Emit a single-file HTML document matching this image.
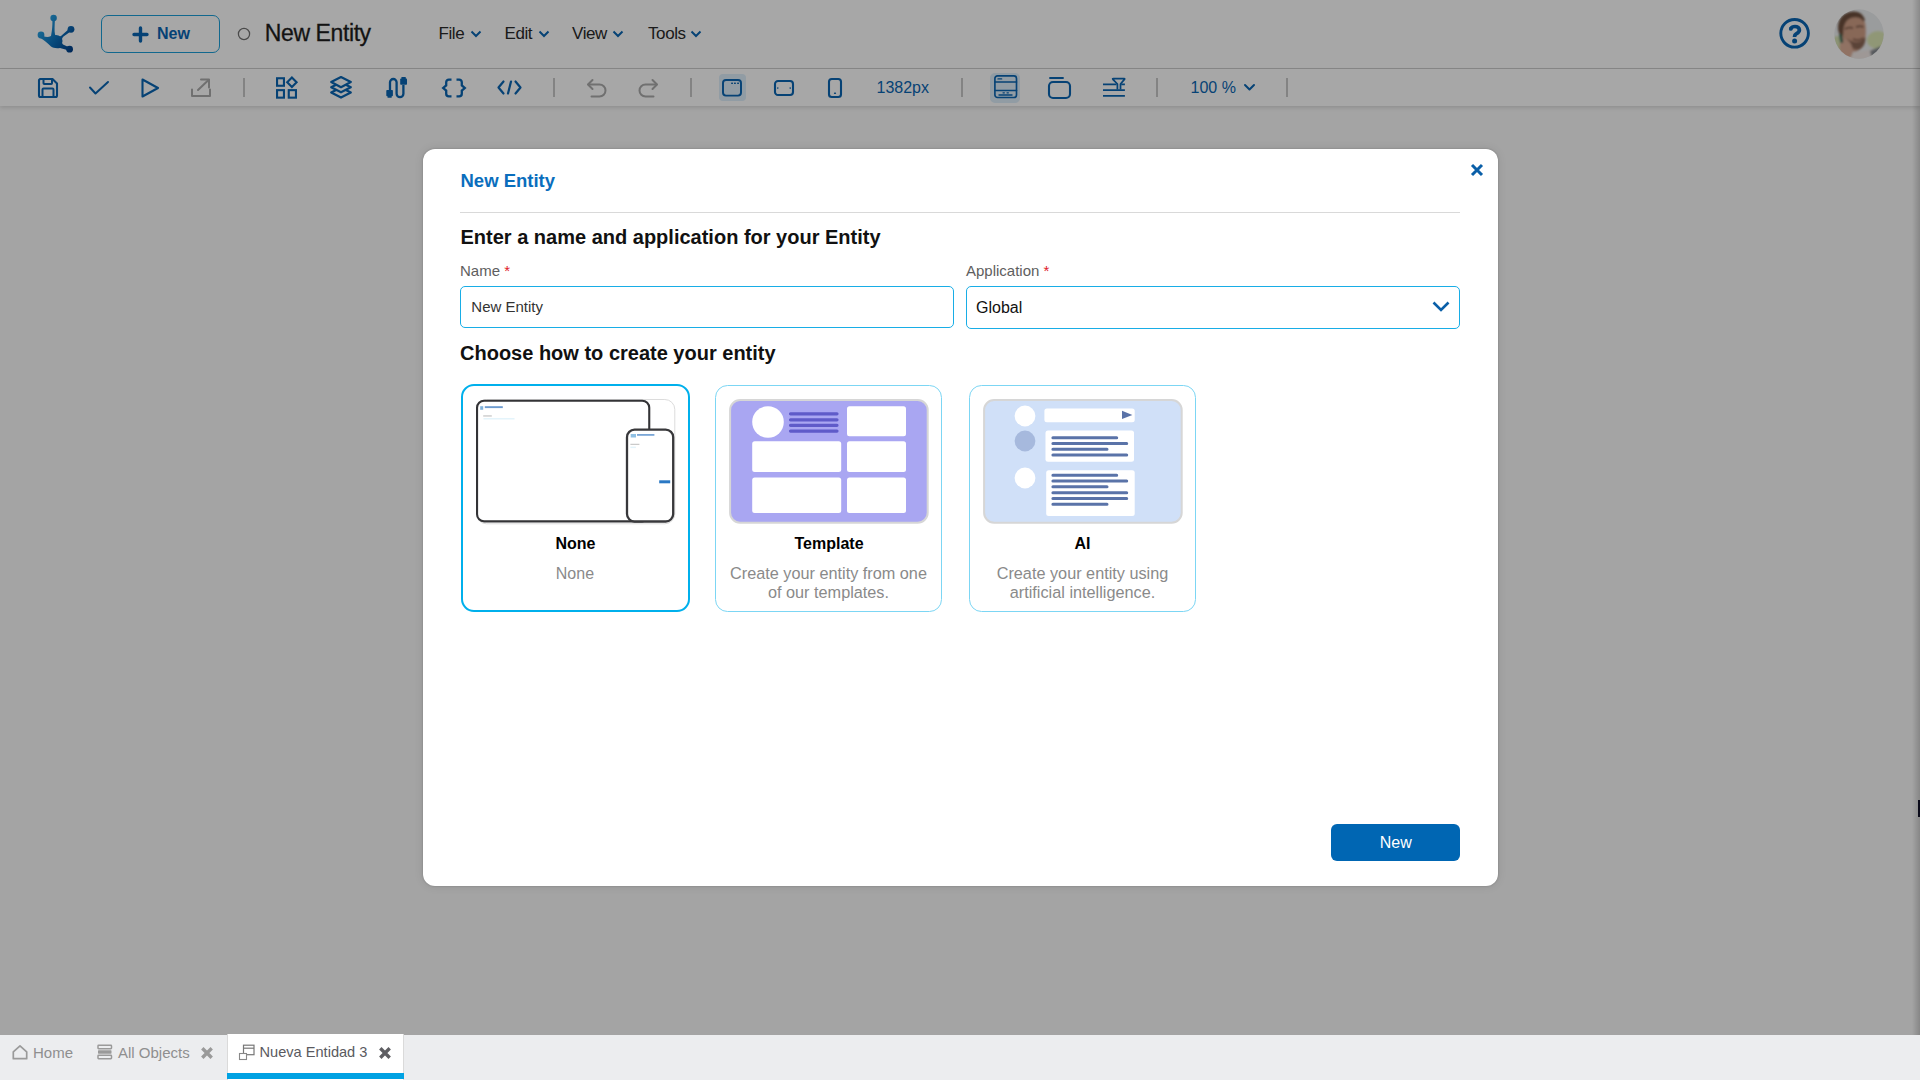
<!DOCTYPE html>
<html><head><meta charset="utf-8">
<style>
*{box-sizing:border-box;margin:0;padding:0}
html,body{width:1920px;height:1080px;overflow:hidden}
body{font-family:"Liberation Sans",sans-serif;background:#fafafa;position:relative;color:#222}
.abs{position:absolute}
#header{left:0;top:0;width:1920px;height:69px;background:#fff;border-bottom:1px solid #cfcfcf}
#toolbar{left:0;top:69px;width:1920px;height:37px;background:#fff;box-shadow:0 2px 4px rgba(0,0,0,.12)}
#overlay{left:0;top:0;width:1920px;height:1035px;background:rgba(0,0,0,.345)}
#rshadow{left:1912px;top:0;width:8px;height:1035px;background:linear-gradient(to right,rgba(0,0,0,0),rgba(0,0,0,.18))}
#modal{left:423px;top:149px;width:1075px;height:737px;background:#fff;border-radius:12px;box-shadow:0 0 2px rgba(0,0,0,.22),0 0 10px rgba(0,0,0,.1)}
#tabs{left:0;top:1035px;width:1920px;height:45px;background:#ecedef}
.t{position:absolute;white-space:nowrap;line-height:1}
svg{position:absolute;overflow:visible}
.sep{position:absolute;top:78px;width:2px;height:19px;background:#c9c9c9}
</style></head><body>
<div id="header" class="abs">
<svg width="60" height="60" style="left:30px;top:5px" viewBox="0 0 60 60">
<defs><linearGradient id="lg" gradientUnits="userSpaceOnUse" x1="9" y1="22" x2="42" y2="46"><stop offset="0" stop-color="#2aa6e6"/><stop offset="0.55" stop-color="#0a6cb8"/><stop offset="1" stop-color="#003d86"/></linearGradient></defs>
<g fill="url(#lg)">
<circle cx="23.6" cy="13" r="3.2"/><circle cx="41" cy="24.3" r="3.4"/><circle cx="11" cy="30" r="3.4"/><circle cx="39.6" cy="44.2" r="3.4"/>
<path d="M22.3 14 C22.8 22 21.5 28 21 31 C17 33.5 13 31 11 30 L10.5 33 C14 35 17.5 38 21 41.5 C23 43 26 43.5 30 43 L39 45.5 L40.5 43 L33 39.5 C31 37 31.5 33.5 33.5 31.5 L42 25.5 L40 23 L31 31 C28.5 32.5 26 31.5 25 29.5 C24.3 26 24.6 20 25 14 Z"/>
<ellipse cx="26" cy="36" rx="6.5" ry="6"/>
</g></svg>
<div class="abs" style="left:101px;top:15px;width:119px;height:38px;border:1.5px solid #1c9fd9;border-radius:7px"></div>
<svg width="17" height="17" style="left:132px;top:26px" viewBox="0 0 17 17"><path d="M8.5 2 V15 M2 8.5 H15" stroke="#0a66b3" stroke-width="3.4" stroke-linecap="round"/></svg>
<div class="t" style="left:157px;top:25.5px;font-size:16px;font-weight:bold;color:#0a66b3">New</div>
<svg width="14" height="14" style="left:237px;top:27px" viewBox="0 0 14 14"><circle cx="7" cy="7" r="5.6" fill="none" stroke="#727272" stroke-width="1.25"/></svg>
<div class="t" style="left:264.8px;top:21.5px;font-size:23px;letter-spacing:-0.4px;color:#1e1e1e;-webkit-text-stroke:0.3px #1e1e1e">New Entity</div>
<div class="t" style="left:438.5px;top:24.6px;font-size:17px;letter-spacing:-0.4px;color:#2a2a2a">File</div>
<div class="t" style="left:504.5px;top:24.6px;font-size:17px;letter-spacing:-0.4px;color:#2a2a2a">Edit</div>
<div class="t" style="left:572px;top:24.6px;font-size:17px;letter-spacing:-0.4px;color:#2a2a2a">View</div>
<div class="t" style="left:648px;top:24.6px;font-size:17px;letter-spacing:-0.4px;color:#2a2a2a">Tools</div>
<svg width="12" height="8" style="left:469.5px;top:30px" viewBox="0 0 12 8"><path d="M1.5 1.5 L6 6 L10.5 1.5" fill="none" stroke="#0a66b3" stroke-width="2"/></svg>
<svg width="12" height="8" style="left:537.5px;top:30px" viewBox="0 0 12 8"><path d="M1.5 1.5 L6 6 L10.5 1.5" fill="none" stroke="#0a66b3" stroke-width="2"/></svg>
<svg width="12" height="8" style="left:611.5px;top:30px" viewBox="0 0 12 8"><path d="M1.5 1.5 L6 6 L10.5 1.5" fill="none" stroke="#0a66b3" stroke-width="2"/></svg>
<svg width="12" height="8" style="left:690px;top:30px" viewBox="0 0 12 8"><path d="M1.5 1.5 L6 6 L10.5 1.5" fill="none" stroke="#0a66b3" stroke-width="2"/></svg>
<svg width="34" height="34" style="left:1778px;top:17px" viewBox="0 0 34 34"><circle cx="16.6" cy="16.35" r="13.8" fill="none" stroke="#0a66b3" stroke-width="2.9"/><path d="M12.6 11.9 C13.6 10.2 15.2 9.5 17 9.5 C19.6 9.5 21.4 11 21.4 13 C21.4 15.1 19.7 16 18.2 16.9 C17 17.6 16.6 18.3 16.6 19.3 V20.1" fill="none" stroke="#0a66b3" stroke-width="3.7" stroke-linecap="butt"/><circle cx="12.75" cy="11.95" r="1.85" fill="#0a66b3"/><circle cx="16.6" cy="24.1" r="2.5" fill="#0a66b3"/></svg>
<svg width="50" height="50" style="left:1833.5px;top:8.8px" viewBox="0 0 50 50">
<defs><clipPath id="avc"><circle cx="25" cy="25" r="24.7"/></clipPath><filter id="avb" x="-20%" y="-20%" width="140%" height="140%"><feGaussianBlur stdDeviation="0.9"/></filter></defs>
<g clip-path="url(#avc)"><rect width="50" height="50" fill="#eceef0"/>
<g filter="url(#avb)">
<ellipse cx="44" cy="31" rx="11" ry="9" fill="#dce7b4"/>
<ellipse cx="3" cy="36" rx="6" ry="9" fill="#d4e0b0"/>
<path d="M16 44 L40 40 L46 52 L12 52 Z" fill="#f1e9e6"/>
<path d="M36 42 L47 37 L48 50 L38 50 Z" fill="#858a90"/>
<path d="M8 14 C9 7 15 4 21 4.5 C27 5 31 10 31.5 17 C32 24 32 31 29 37 C26 42 21 44 16 42 C11 39 8 32 7.5 24 Z" fill="#d09f86"/>
<path d="M4 19 C4 9 10 3 19 2.5 C25 2.2 29 5 31 11 L29.5 12.5 C27 8.5 22 7.5 17 9 C13 10.5 10.5 14 9.5 20 L9 27 L6.5 27 C5 24 4 22 4 19 Z" fill="#6e4f3c"/>
<path d="M11 20 Q15 17.5 19 19" stroke="#6a4a3a" stroke-width="1.6" fill="none"/>
<path d="M22 18 Q26 16.5 29.5 18" stroke="#6a4a3a" stroke-width="1.6" fill="none"/>
<path d="M13 32 C16 39 21 42 26 40 C30 38 31.5 33 31.5 29 L30 28.5 C28 32 25 33.5 21 33 C18 32.5 15.5 31 13 30 Z" fill="#8c6856"/>
<path d="M19 30 Q24 32.5 29 29" stroke="#7a5444" stroke-width="1.5" fill="none"/>
<ellipse cx="12" cy="40" rx="6.5" ry="10" transform="rotate(-12 12 40)" fill="#dcae98"/>
<rect x="5.5" y="25" width="3.2" height="9" rx="1.2" transform="rotate(-10 7 29.5)" fill="#456e5a"/>
</g></g></svg>
</div>
<div id="toolbar" class="abs"></div>
<div class="abs" style="left:0;top:0">
<svg width="22" height="22" style="left:37px;top:77px" viewBox="0 0 22 22"><path d="M3 2 H15.5 L20 6.5 V18.5 a1.5 1.5 0 0 1 -1.5 1.5 H3.5 a1.5 1.5 0 0 1 -1.5 -1.5 V3.5 a1.5 1.5 0 0 1 1.5 -1.5 Z" fill="none" stroke="#0a66b3" stroke-width="2.1" stroke-linejoin="round" stroke-linecap="round"/><path d="M6.5 2 V6.2 a0.8 0.8 0 0 0 0.8 0.8 H14.2 a0.8 0.8 0 0 0 0.8 -0.8 V2" fill="none" stroke="#0a66b3" stroke-width="2" stroke-linejoin="round" stroke-linecap="round"/><path d="M5.5 20 V12.5 a1 1 0 0 1 1 -1 H15.5 a1 1 0 0 1 1 1 V20" fill="none" stroke="#0a66b3" stroke-width="2" stroke-linejoin="round" stroke-linecap="round"/></svg>
<svg width="22" height="16" style="left:88px;top:80px" viewBox="0 0 22 16"><path d="M2 7.5 L7.5 13.5 L20 2" fill="none" stroke="#0a66b3" stroke-width="2" stroke-linejoin="round" stroke-linecap="round"/></svg>
<svg width="20" height="22" style="left:140px;top:77px" viewBox="0 0 20 22"><path d="M2.5 2.5 L18 11 L2.5 19.5 Z" fill="none" stroke="#0a66b3" stroke-width="2.1" stroke-linejoin="round" stroke-linecap="round"/></svg>
<svg width="22" height="20" style="left:190px;top:78px" viewBox="0 0 22 20"><path d="M2 11.5 V18 H20 V11.5" fill="none" stroke="#ababab" stroke-width="2" stroke-linejoin="round" stroke-linecap="round"/><path d="M8 12 L18.5 2" fill="none" stroke="#ababab" stroke-width="2" stroke-linejoin="round" stroke-linecap="round"/><path d="M11 1.5 H19 V9.5" fill="none" stroke="#ababab" stroke-width="2" stroke-linejoin="round" stroke-linecap="round"/></svg>
<div class="sep" style="left:243px"></div>
<div class="sep" style="left:553px"></div>
<div class="sep" style="left:689.5px"></div>
<div class="sep" style="left:961px"></div>
<div class="sep" style="left:1156px"></div>
<div class="sep" style="left:1286px"></div>
<svg width="24" height="25" style="left:275px;top:75px" viewBox="0 0 24 25"><rect x="2.05" y="3.25" width="6.9" height="7.5" fill="none" stroke="#0a66b3" stroke-width="2.1"/><rect x="2.05" y="15.15" width="6.9" height="7.5" fill="none" stroke="#0a66b3" stroke-width="2.1"/><rect x="13.75" y="15.15" width="7.2" height="7.5" fill="none" stroke="#0a66b3" stroke-width="2.1"/><path d="M16.9 2.5 L21.6 7.2 L16.9 11.9 L12.2 7.2 Z" fill="none" stroke="#0a66b3" stroke-width="2.1"/></svg>
<svg width="24" height="25" style="left:329px;top:75px" viewBox="0 0 24 25"><path d="M12 12.45 L21.8 17.50 L12 22.55 L2.2 17.50 Z" fill="#fff" stroke="#0a66b3" stroke-width="2.2" stroke-linejoin="round"/><path d="M12 7.25 L21.8 12.30 L12 17.35 L2.2 12.30 Z" fill="#fff" stroke="#0a66b3" stroke-width="2.2" stroke-linejoin="round"/><path d="M12 2.05 L21.8 7.10 L12 12.15 L2.2 7.10 Z" fill="#fff" stroke="#0a66b3" stroke-width="2.2" stroke-linejoin="round"/></svg>
<svg width="24" height="24" style="left:385px;top:76px" viewBox="0 0 24 24"><path d="M5 14 V6.3 a3.3 3.3 0 0 1 6.6 0 V17.7 a3.3 3.3 0 0 0 6.8 0 V9" fill="none" stroke="#0a66b3" stroke-width="2.3"/><rect x="1.3" y="14" width="6.6" height="6.2" rx="0.8" fill="#0a66b3"/><rect x="2.5" y="19.5" width="4.2" height="2.3" rx="0.6" fill="#0a66b3"/><rect x="15.2" y="2.5" width="6.8" height="6.3" rx="0.8" fill="#0a66b3"/><rect x="16.4" y="1" width="4.4" height="2.2" rx="0.6" fill="#0a66b3"/></svg>
<svg width="26" height="22" style="left:441px;top:77px" viewBox="0 0 26 22"><path d="M10.5 2.6 H7.8 a2.6 2.6 0 0 0 -2.6 2.6 V8.4 L2.2 11 L5.2 13.6 V16.8 a2.6 2.6 0 0 0 2.6 2.6 H10.5" fill="none" stroke="#0a66b3" stroke-width="2.3" stroke-linecap="butt" stroke-linejoin="miter"/><path d="M15.5 2.6 H18.2 a2.6 2.6 0 0 1 2.6 2.6 V8.4 L23.8 11 L20.8 13.6 V16.8 a2.6 2.6 0 0 1 -2.6 2.6 H15.5" fill="none" stroke="#0a66b3" stroke-width="2.3" stroke-linecap="butt" stroke-linejoin="miter"/></svg>
<svg width="27" height="17" style="left:496px;top:79px" viewBox="0 0 27 17"><path d="M7.5 2.5 L2.5 8.5 L7.5 14.5" fill="none" stroke="#0a66b3" stroke-width="2.2" stroke-linejoin="round" stroke-linecap="round"/><path d="M19.5 2.5 L24.5 8.5 L19.5 14.5" fill="none" stroke="#0a66b3" stroke-width="2.2" stroke-linejoin="round" stroke-linecap="round"/><path d="M15 2.5 L12 14.5" fill="none" stroke="#0a66b3" stroke-width="2.2" stroke-linejoin="round" stroke-linecap="round"/></svg>
<svg width="22" height="21" style="left:586px;top:78px" viewBox="0 0 22 21"><path d="M6.5 2 L2 6.5 L6.5 11" fill="none" stroke="#ababab" stroke-width="2" stroke-linejoin="round" stroke-linecap="round"/><path d="M2.5 6.5 H13.5 a6 6 0 0 1 0 12 H5.5" fill="none" stroke="#ababab" stroke-width="2" stroke-linejoin="round" stroke-linecap="round"/></svg>
<svg width="22" height="21" style="left:637px;top:78px" viewBox="0 0 22 21"><path d="M15.5 2 L20 6.5 L15.5 11" fill="none" stroke="#ababab" stroke-width="2" stroke-linejoin="round" stroke-linecap="round"/><path d="M19.5 6.5 H8.5 a6 6 0 0 0 0 12 H16.5" fill="none" stroke="#ababab" stroke-width="2" stroke-linejoin="round" stroke-linecap="round"/></svg>
<div class="abs" style="left:719px;top:74px;width:27px;height:27px;border-radius:4px;background:#ddeefa"></div>
<svg width="22" height="21" style="left:721px;top:78px" viewBox="0 0 22 21"><rect x="2" y="2.05" width="18" height="15.55" rx="3" fill="none" stroke="#0a66b3" stroke-width="1.95"/><rect x="10.1" y="4.6" width="1.9" height="1.5" rx="0.6" fill="#0a66b3"/><rect x="13" y="4.6" width="1.9" height="1.5" rx="0.6" fill="#0a66b3"/><rect x="16.1" y="4.6" width="1.9" height="1.5" rx="0.6" fill="#0a66b3"/></svg>
<svg width="22" height="18" style="left:773px;top:79px" viewBox="0 0 22 18"><rect x="2" y="2" width="18" height="14" rx="3" fill="none" stroke="#0a66b3" stroke-width="2.1" stroke-linejoin="round" stroke-linecap="round"/><path d="M4.8 9 v0.1 M17.2 9 v0.1" fill="none" stroke="#0a66b3" stroke-width="1.6" stroke-linejoin="round" stroke-linecap="round"/></svg>
<svg width="16" height="22" style="left:827px;top:77px" viewBox="0 0 16 22"><rect x="2" y="2" width="12" height="18" rx="2.8" fill="none" stroke="#0a66b3" stroke-width="2.1" stroke-linejoin="round" stroke-linecap="round"/><path d="M7.6 16.2 h0.8" fill="none" stroke="#0a66b3" stroke-width="1.4" stroke-linejoin="round" stroke-linecap="round"/></svg>
<div class="t" style="left:876.5px;top:79.7px;font-size:16px;color:#0a66b3">1382px</div>
<div class="abs" style="left:990px;top:73px;width:30px;height:30px;border-radius:5px;background:#ddeefa"></div>
<svg width="25" height="25" style="left:993px;top:74px" viewBox="0 0 25 25"><rect x="1.9" y="1.9" width="21.6" height="21.6" rx="2.6" fill="none" stroke="#0a66b3" stroke-width="1.65" stroke-linejoin="round" stroke-linecap="round"/><path d="M2 8 H23.5 M2 16.5 H23.5" fill="none" stroke="#0a66b3" stroke-width="1.65" stroke-linejoin="round" stroke-linecap="round"/><path d="M5 4.9 H8.6" fill="none" stroke="#0a66b3" stroke-width="1.4" stroke-linejoin="round" stroke-linecap="round" stroke-linecap="butt"/><path d="M6 21 H19" fill="none" stroke="#0a66b3" stroke-width="1.4" stroke-linejoin="round" stroke-linecap="round" stroke-linecap="butt"/><path d="M10 18.8 H11.4 M14 18.8 H15.4" fill="none" stroke="#0a66b3" stroke-width="1.2" stroke-linejoin="round" stroke-linecap="round" stroke-linecap="butt"/></svg>
<svg width="25" height="24" style="left:1047px;top:76px" viewBox="0 0 25 24"><path d="M3 2 H16" fill="none" stroke="#0a66b3" stroke-width="1.9" stroke-linejoin="round" stroke-linecap="round" stroke-linecap="butt"/><rect x="2" y="6" width="21" height="16" rx="4" fill="none" stroke="#0a66b3" stroke-width="2.1" stroke-linejoin="round" stroke-linecap="round"/></svg>
<svg width="24" height="22" style="left:1102px;top:76px" viewBox="0 0 24 22"><path d="M1 8.4 H14.5 M19.2 8.4 H22.9 M1 14.2 H22.9 M1 19.9 H22.9" fill="none" stroke="#0a66b3" stroke-width="1.75"/><path d="M15.4 13.4 V8 L10.9 3.3 Q10.3 2.5 11.3 2.5 H22.1 Q23.1 2.5 22.4 3.4 L18.5 8 V13.4" fill="none" stroke="#0a66b3" stroke-width="1.75" stroke-linejoin="round"/></svg>
<div class="t" style="left:1190.5px;top:80.3px;font-size:16px;color:#0a66b3">100 %</div>
<svg width="13" height="9" style="left:1242.5px;top:83px" viewBox="0 0 13 9"><path d="M2 2 L6.5 6.5 L11 2" fill="none" stroke="#0a66b3" stroke-width="2" stroke-linejoin="round" stroke-linecap="round"/></svg>
</div>
<div id="overlay" class="abs"></div>
<div id="rshadow" class="abs"></div>
<div class="abs" style="left:1918px;top:800px;width:2px;height:17px;background:#0b0b1a"></div>
<div id="modal" class="abs"></div>
<div class="abs" style="left:0;top:0">
<div class="t" style="left:460.5px;top:172.2px;font-size:18.5px;font-weight:bold;color:#0a6ebd">New Entity</div>
<svg width="16" height="16" style="left:1469px;top:162px" viewBox="0 0 16 16"><path d="M3 3 L13 13 M13 3 L3 13" stroke="#0a5fa8" stroke-width="3" stroke-linecap="butt"/></svg>
<div class="abs" style="left:460px;top:212px;width:1000px;height:1px;background:#d9d9d9"></div>
<div class="t" style="left:460.5px;top:227px;font-size:20px;font-weight:bold;color:#111">Enter a name and application for your Entity</div>
<div class="t" style="left:460px;top:263px;font-size:15px;color:#5e5e5e">Name <span style="color:#e0202a">*</span></div>
<div class="abs" style="left:460px;top:286px;width:494px;height:41.5px;border:1.6px solid #18ade6;border-radius:5px"></div>
<div class="t" style="left:471.3px;top:299.3px;font-size:15px;color:#333">New Entity</div>
<div class="t" style="left:966px;top:263px;font-size:15px;color:#5e5e5e">Application <span style="color:#e0202a">*</span></div>
<div class="abs" style="left:966px;top:286px;width:494px;height:42.5px;border:1.6px solid #18ade6;border-radius:5px"></div>
<div class="t" style="left:976px;top:299.5px;font-size:16px;color:#111">Global</div>
<svg width="20" height="14" style="left:1431px;top:300px" viewBox="0 0 20 14"><path d="M2.5 2.5 L10 10 L17.5 2.5" fill="none" stroke="#0a5fa8" stroke-width="2.6"/></svg>
<div class="t" style="left:460px;top:343.2px;font-size:20px;font-weight:bold;color:#111">Choose how to create your entity</div>
<div class="abs" style="left:461px;top:384px;width:229px;height:228px;border:2px solid #00b0ec;border-radius:13px"></div>
<div class="abs" style="left:715px;top:385px;width:227px;height:227px;border:1px solid #7cd6f4;border-radius:12.5px"></div>
<div class="abs" style="left:969px;top:385px;width:227px;height:227px;border:1px solid #7cd6f4;border-radius:12.5px"></div>
<svg width="200" height="126" style="left:476px;top:399px" viewBox="0 0 200 126">
<rect x="0.5" y="0.5" width="198.3" height="124.3" rx="10" fill="#fff" stroke="#dcdcdc" stroke-width="1"/>
<rect x="1.05" y="1.75" width="172.2" height="120.6" rx="7" fill="#fff" stroke="#333336" stroke-width="2.1"/>
<rect x="4.2" y="7.2" width="3" height="3.6" fill="#7fb2dc"/>
<rect x="8.8" y="7.2" width="18" height="1.9" fill="#6d9bcf"/>
<rect x="7.2" y="16.3" width="8.6" height="1.3" fill="#c8c8c8"/>
<rect x="7.5" y="19" width="31" height="1.5" fill="#e4f4fb"/>
<rect x="151" y="30.7" width="46.2" height="91.8" rx="7.5" fill="#fff" stroke="#38383b" stroke-width="2.3"/>
<rect x="154.7" y="35" width="5.3" height="3.5" fill="#8fc0e4"/>
<rect x="161" y="35" width="17.4" height="1.8" fill="#7aa6d6"/>
<rect x="154.4" y="44.8" width="9" height="1" fill="#bdbdbd"/>
<rect x="154.4" y="47.6" width="5.5" height="1.5" fill="#e3f3fa"/>
<rect x="183.2" y="81.3" width="11" height="3" fill="#2a78c4"/>
</svg>
<svg width="200" height="126" style="left:729px;top:399px" viewBox="0 0 200 126">
<rect x="1.1" y="1.1" width="197.6" height="122.6" rx="10" fill="#a9a6f2" stroke="#d6d6d6" stroke-width="2"/>
<circle cx="39" cy="23" r="15.8" fill="#fff"/>
<path d="M61.5 14.8 H108 M61.5 20.8 H108 M61.5 26.3 H108 M61.5 32.1 H108" stroke="#5f5bc9" stroke-width="3.2" stroke-linecap="round"/>
<rect x="118" y="7.3" width="59" height="30" rx="2.5" fill="#fff"/>
<rect x="23.2" y="42.2" width="89" height="30.9" rx="2.5" fill="#fff"/>
<rect x="118" y="42.2" width="59" height="30.9" rx="2.5" fill="#fff"/>
<rect x="23.2" y="78.5" width="89" height="35.4" rx="2.5" fill="#fff"/>
<rect x="118" y="78.5" width="59" height="35.4" rx="2.5" fill="#fff"/>
</svg>
<svg width="200" height="126" style="left:983px;top:399px" viewBox="0 0 200 126">
<rect x="1.1" y="1.1" width="197.6" height="122.6" rx="10" fill="#d0e0f8" stroke="#d6d6d6" stroke-width="2"/>
<circle cx="42" cy="17" r="10.4" fill="#fff"/>
<circle cx="42" cy="42" r="10.4" fill="#a6b9dd"/>
<circle cx="42" cy="79" r="10.4" fill="#fff"/>
<rect x="61.4" y="9.6" width="90.3" height="13.6" rx="2.5" fill="#fff"/>
<path d="M139 11.8 L149.4 15.9 L139 20 Z" fill="#5a73a8"/>
<rect x="62.5" y="31.6" width="88.5" height="31.1" rx="2.5" fill="#fff"/>
<path d="M69.9 38.8 H133.7 M69.9 44.5 H143.7 M69.9 50.2 H124 M69.9 55.9 H143.7" stroke="#5a73a8" stroke-width="3" stroke-linecap="round"/>
<rect x="63.2" y="71.3" width="88.5" height="45.8" rx="2.5" fill="#fff"/>
<path d="M69.9 76.3 H133.7 M69.9 82.1 H143.7 M69.9 87.8 H124 M69.9 93.7 H143.7 M69.9 99.4 H143.7 M69.9 105.2 H124" stroke="#5a73a8" stroke-width="3" stroke-linecap="round"/>
</svg>
<div class="t" style="left:555.5px;top:535.5px;font-size:16px;font-weight:bold;color:#000">None</div>
<div class="t" style="left:555.8px;top:565.7px;font-size:16px;color:#8a8a8a">None</div>
<div class="t" style="left:794.5px;top:535.5px;font-size:16px;font-weight:bold;color:#000">Template</div>
<div class="abs" style="left:715px;top:564.3px;width:227px;text-align:center;font-size:16.25px;line-height:19px;color:#8a8a8a">Create your entity from one<br>of our templates.</div>
<div class="t" style="left:1074.5px;top:535.5px;font-size:16px;font-weight:bold;color:#000">AI</div>
<div class="abs" style="left:969px;top:564.3px;width:227px;text-align:center;font-size:16.25px;line-height:19px;color:#8a8a8a">Create your entity using<br>artificial intelligence.</div>
<div class="abs" style="left:1331px;top:824px;width:129px;height:37px;border-radius:6px;background:#0066b3"></div>
<div class="t" style="left:1379.8px;top:834.5px;font-size:16px;color:#fff">New</div>
</div>
<div id="tabs" class="abs">
<svg width="18" height="18" style="left:10.5px;top:9px" viewBox="0 0 18 18"><path d="M2.3 7.9 L9 1.8 L15.7 7.9 V14.7 H2.3 Z" fill="none" stroke="#9a9a9a" stroke-width="1.7" stroke-linejoin="round"/></svg>
<div class="t" style="left:33px;top:10px;font-size:15px;color:#8f8f8f">Home</div>
<svg width="16" height="16" style="left:97px;top:9px" viewBox="0 0 16 16"><rect x="1" y="1.3" width="13.5" height="3.4" rx="0.6" fill="none" stroke="#9a9a9a" stroke-width="1.5"/><rect x="1" y="6.3" width="13.5" height="3.4" rx="0.6" fill="#9a9a9a"/><rect x="1" y="11.3" width="13.5" height="3.4" rx="0.6" fill="none" stroke="#9a9a9a" stroke-width="1.5"/></svg>
<div class="t" style="left:118px;top:10px;font-size:15px;color:#8f8f8f">All Objects</div>
<svg width="14" height="14" style="left:199.5px;top:11px" viewBox="0 0 14 14"><path d="M2.3 2.3 L11.7 11.7 M11.7 2.3 L2.3 11.7" stroke="#9a9a9a" stroke-width="3.4" stroke-linecap="butt"/></svg>
<div class="abs" style="left:227px;top:-1px;width:177px;height:46px;background:#fff;border-left:1px solid #dadada;border-right:1px solid #dadada"></div>
<div class="abs" style="left:227px;top:38px;width:177px;height:6px;background:#00a2e3"></div>
<svg width="18" height="18" style="left:238px;top:9px" viewBox="0 0 18 18"><rect x="5.5" y="1.2" width="10.5" height="9.5" fill="#fff" stroke="#777" stroke-width="1.2"/><path d="M5.5 4.2 H16" stroke="#777" stroke-width="1.2"/><rect x="1.5" y="9.5" width="7" height="6" fill="#fff" stroke="#888" stroke-width="1.1"/></svg>
<div class="t" style="left:259.5px;top:10px;font-size:14.6px;color:#5a5a60">Nueva Entidad 3</div>
<svg width="14" height="14" style="left:377.5px;top:11px" viewBox="0 0 14 14"><path d="M2.3 2.3 L11.7 11.7 M11.7 2.3 L2.3 11.7" stroke="#5e5e62" stroke-width="3.4" stroke-linecap="butt"/></svg>
</div>
</body></html>
